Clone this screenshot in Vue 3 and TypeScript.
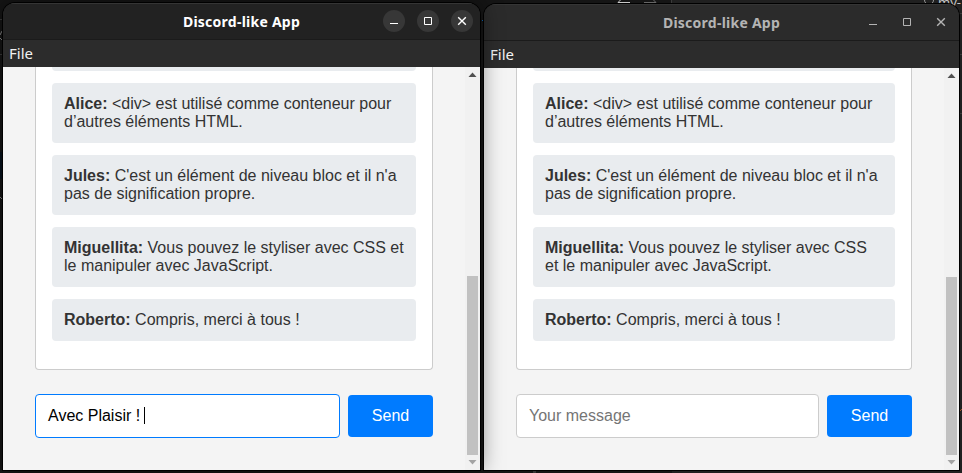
<script setup lang="ts">
interface Message {
  author: string
  text: string
}

interface ChatWindow {
  id: string
  active: boolean
  draft: string
}

const messages: Message[] = [
  { author: 'Alice', text: '<div> est utilisé comme conteneur pour d’autres éléments HTML.' },
  { author: 'Jules', text: "C'est un élément de niveau bloc et il n'a pas de signification propre." },
  { author: 'Miguellita', text: 'Vous pouvez le styliser avec CSS et le manipuler avec JavaScript.' },
  { author: 'Roberto', text: 'Compris, merci à tous !' },
]

const windows: ChatWindow[] = [
  { id: 'first', active: true, draft: 'Avec Plaisir ! ' },
  { id: 'second', active: false, draft: '' },
]
</script>

<template>
  <div class="desktop">
    <svg class="backdrop" width="962" height="473" viewBox="0 0 962 473" aria-hidden="true">
      <rect width="962" height="473" fill="#151515" />
      <rect x="672" width="290" height="473" fill="#202020" />
      <path d="M671.5 0V4M0 19.5H3M0 54.5H3M958 13.5h4M958 54.5h4M958 113.5h4" stroke="#3a3a3a" />
      <path d="M618 2.5h12M618 2.5l3-3" stroke="#c8c8c8" fill="none" />
      <path d="M644 2.5h12M656 2.5l-3-3" stroke="#666" fill="none" />
      <circle cx="929" cy="0" r="4.5" stroke="#999" fill="none" />
      <path d="M0 35l2-4M0 38l2 2M0 197l2 2" stroke="#858585" fill="none" />
      <rect x="482" y="20" width="1" height="1" fill="#0a68b8" />
      <rect x="0" y="152" width="3" height="27" fill="#07121c" />
      <rect x="533" y="471" width="3" height="2" fill="#333" />
      <path d="M960 411l2-2" stroke="#9b5428" />
    </svg>
    <span class="tab-label">my-</span>

    <section
      v-for="win in windows"
      :key="win.id"
      class="window"
      :class="{ active: win.active }"
    >
      <header class="titlebar">
        <h1 class="title">Discord-like App</h1>
        <div class="controls">
          <button class="control" aria-label="Minimize">
            <svg width="22" height="22" viewBox="0 0 22 22"><path d="M7 13.5h8" stroke="currentColor" /></svg>
          </button>
          <button class="control" aria-label="Maximize">
            <svg width="22" height="22" viewBox="0 0 22 22"><path d="M7.5 7.5h7v7h-7z" stroke="currentColor" fill="none" /></svg>
          </button>
          <button class="control" aria-label="Close">
            <svg width="22" height="22" viewBox="0 0 22 22"><path d="M7.2 7.2l7.6 7.6M14.8 7.2l-7.6 7.6" stroke="currentColor" stroke-width="1.4" /></svg>
          </button>
        </div>
      </header>
      <nav class="menubar"><span>File</span></nav>

      <div class="viewport">
        <main class="page">
          <div class="messages">
            <div class="message" />
            <div v-for="m in messages" :key="m.author" class="message">
              <strong>{{ m.author }}:</strong> {{ m.text }}
            </div>
          </div>
          <form class="composer" @submit.prevent>
            <div v-if="win.draft" class="field focused" role="textbox">{{ win.draft }}<span class="caret" /></div>
            <input v-else class="field" type="text" placeholder="Your message" />
            <button class="send" type="submit">Send</button>
          </form>
        </main>
        <div class="scrollbar">
          <svg class="arrow" width="15" height="15" viewBox="0 0 15 15"><path d="M3.5 10L7.5 5.5L11.5 10z" fill="#505050" /></svg>
          <div class="thumb" />
          <svg class="arrow" width="15" height="15" viewBox="0 0 15 15"><path d="M3.5 5L7.5 9.5L11.5 5z" fill="#a3a3a3" /></svg>
        </div>
      </div>
    </section>
  </div>
</template>

<style>
body {
  background: #151515;
}
</style>

<style scoped>
* {
  box-sizing: border-box;
}

.desktop {
  position: relative;
  display: flex;
  align-items: flex-end;
  gap: 4px;
  width: 962px;
  height: 473px;
  padding: 3px;
  overflow: hidden;
  font-family: 'Liberation Sans', Arial, sans-serif;
}

.backdrop {
  position: absolute;
  inset: 0;
}

.tab-label {
  position: absolute;
  left: 938px;
  top: -6px;
  color: #c4c4c4;
  font: 13px/16px 'Noto Sans', sans-serif;
}

.window {
  position: relative;
  display: flex;
  flex-direction: column;
  width: 475px;
  height: 466px;
  border-radius: 12px 12px 0 0;
  overflow: hidden;
  background: #2c2c2c;
  box-shadow: 0 0 0 1px #000;
}

.window.active {
  z-index: 1;
  width: 477px;
  height: 467px;
  box-shadow: 0 0 0 1px #000, 0 0 22px rgba(0, 0, 0, 0.5);
}

.titlebar {
  display: grid;
  grid-template-columns: 1fr auto 1fr;
  align-items: start;
  flex: 0 0 37px;
  padding-top: 6px;
  border-top: 1px solid #353535;
  border-bottom: 1px solid #1b1b1b;
  color: #b4b4b4;
  background: #2b2b2b;
}

.active .titlebar {
  color: #fff;
  background: #222;
}

.title {
  grid-column: 2;
  margin: 0;
  padding-top: 2px;
  font: bold 14px/20px 'Noto Sans', sans-serif;
  letter-spacing: 0.25px;
}

.controls {
  display: flex;
  justify-content: flex-end;
  gap: 12px;
  padding-right: 7px;
}

.control {
  display: block;
  width: 22px;
  height: 22px;
  padding: 0;
  border: 0;
  border-radius: 50%;
  color: inherit;
  background: transparent;
}

.active .control {
  background: #373737;
}

.control svg {
  display: block;
}

.menubar {
  flex: 0 0 27px;
  padding-left: 6px;
  color: #f2f2f2;
  background: #2c2c2c;
  font: 15px/27px 'Noto Sans', sans-serif;
}

.viewport {
  display: flex;
  flex: 1;
  min-height: 0;
  background: #f4f4f4;
}

.page {
  display: flex;
  flex-direction: column;
  justify-content: flex-end;
  gap: 24px;
  flex: 1;
  min-width: 0;
  padding: 0 32px 32px;
}

.messages {
  display: flex;
  flex-direction: column;
  justify-content: flex-end;
  gap: 12px;
  flex: 1;
  min-height: 0;
  overflow: hidden;
  padding: 0 16px 28px;
  border: 1px solid #ccc;
  border-top: 0;
  border-radius: 0 0 4px 4px;
  background: #fff;
}

.message {
  flex: none;
  min-height: 42px;
  padding: 12px;
  border-radius: 4px;
  color: #333;
  background: #e9ecef;
  font-size: 16px;
  line-height: 18px;
}

.composer {
  display: flex;
  align-items: center;
  gap: 8px;
}

.field {
  flex: 1;
  min-width: 0;
  height: 44px;
  padding: 12px;
  border: 1px solid #ccc;
  border-radius: 4px;
  color: #000;
  background: #fff;
  font: 16px/18px 'Liberation Sans', Arial, sans-serif;
  white-space: pre;
}

.field::placeholder {
  color: #757575;
}

.focused {
  border-color: #007bff;
}

.caret {
  display: inline-block;
  width: 1px;
  height: 17px;
  margin-left: -1px;
  vertical-align: -3px;
  background: #000;
}

.send {
  width: 85px;
  height: 42px;
  padding: 0;
  border: 0;
  border-radius: 4px;
  color: #fff;
  background: #007bff;
  font: 16px/18px 'Liberation Sans', Arial, sans-serif;
}

.scrollbar {
  display: flex;
  flex-direction: column;
  justify-content: flex-end;
  flex: 0 0 15px;
  background: #f1f1f1;
}

.arrow {
  display: block;
  flex: none;
}

.arrow:first-child {
  margin-bottom: auto;
}

.thumb {
  flex: 0 0 178px;
  margin: 0 2px;
  background: #c1c1c1;
}

.active .thumb {
  flex-basis: 179px;
}
</style>
